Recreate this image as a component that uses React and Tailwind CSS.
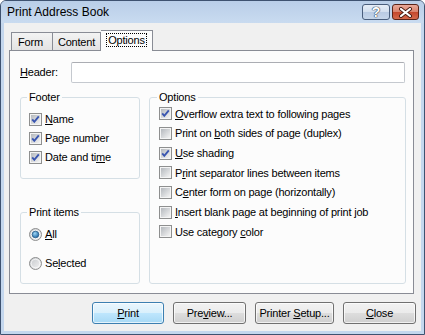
function Check({ checked }) {
  return (
    <svg width="13" height="13" viewBox="0 0 13 13" className="shrink-0">
      <defs>
        <linearGradient id="cbIn" x1="0" y1="0" x2="1" y2="1">
          <stop offset="0" stopColor="#b4b8bd" />
          <stop offset="1" stopColor="#f4f4f4" />
        </linearGradient>
      </defs>
      <rect x="0.5" y="0.5" width="12" height="12" fill="#f4f4f4" stroke="#8e8f8f" />
      <rect x="2" y="2" width="9" height="9" fill="url(#cbIn)" />
      {checked && (
        <path d="M3.2 6.4 L5.3 8.8 L9.8 3.4" fill="none" stroke="#3a56b0" strokeWidth="1.9" />
      )}
    </svg>
  )
}

function Radio({ checked }) {
  return (
    <svg width="13" height="13" viewBox="0 0 13 13" className="shrink-0">
      <defs>
        <linearGradient id="rbIn" x1="0" y1="0" x2="1" y2="1">
          <stop offset="0" stopColor="#c2c5c9" />
          <stop offset="1" stopColor="#f6f6f6" />
        </linearGradient>
        <radialGradient id="rbDot" cx="0.4" cy="0.35" r="0.7">
          <stop offset="0" stopColor="#9fd8f7" />
          <stop offset="1" stopColor="#17609f" />
        </radialGradient>
      </defs>
      <circle cx="6.5" cy="6.5" r="6" fill="url(#rbIn)" stroke="#8e8f8f" />
      <circle cx="6.5" cy="6.5" r="4.3" fill="none" stroke="#fbfbfb" strokeWidth="0.8" />
      {checked && <circle cx="6.5" cy="6.5" r="3.3" fill="url(#rbDot)" stroke="#2b5f8c" strokeWidth="0.8" />}
    </svg>
  )
}

function Row({ children, checked, radio, h = 'h-[19px]' }) {
  return (
    <div className={`flex items-center gap-[3px] ${h}`}>
      {radio ? <Radio checked={checked} /> : <Check checked={checked} />}
      <span className="whitespace-nowrap">{children}</span>
    </div>
  )
}

function Btn({ children, w, primary }) {
  return (
    <button
      className={`${w} h-[22px] rounded-[3px] border text-[11px] text-black shadow-[inset_0_0_0_1px_#ffffffb0] ${
        primary
          ? 'border-[#3c7fb1] bg-[linear-gradient(#eaf6fd_0%,#d9f0fc_50%,#bee6fd_51%,#a7d9f5_100%)]'
          : 'border-[#707070] bg-[linear-gradient(#f2f2f2_0%,#ebebeb_50%,#dddddd_51%,#cfcfcf_100%)]'
      }`}
    >
      {children}
    </button>
  )
}

export default function App() {
  return (
    <div className="w-[425px] h-[335px] flex flex-col border border-[#3e5270] rounded-t-[6px] bg-[#c4d7ee] overflow-hidden font-['Liberation_Sans',Arial,sans-serif] text-[11px] tracking-[-0.2px] text-black">
      {/* title bar */}
      <div className="h-[22px] flex items-center pl-[6px] pr-[5px] bg-[linear-gradient(#b9cee8,#c9dbf0)]">
        <span className="flex-1 text-[12px] tracking-normal">Print Address Book</span>
        <div className="flex gap-[2px]">
          <div className="w-[28px] h-[16px] rounded-[3px] border border-[#4a5e7c] bg-[linear-gradient(#e6eef8_0%,#d3dfee_50%,#b9cbe3_51%,#c6d6ea_100%)] flex items-center justify-center">
            <span className="text-[14px] font-bold leading-none text-white [text-shadow:0_0_1px_#2c3a50,0_0_1px_#2c3a50,0_0_1px_#2c3a50]">?</span>
          </div>
          <div className="w-[27px] h-[16px] rounded-[3px] border border-[#5a2418] bg-[linear-gradient(#e9a999_0%,#d9826c_50%,#c4472c_51%,#d56a4c_100%)] flex items-center justify-center">
            <svg width="15" height="11" viewBox="0 0 15 11">
              <path d="M3 2 L12 9 M12 2 L3 9" stroke="#4a1d14" strokeWidth="4" strokeLinecap="round" />
              <path d="M3 2 L12 9 M12 2 L3 9" stroke="#ffffff" strokeWidth="2.2" strokeLinecap="round" />
            </svg>
          </div>
        </div>
      </div>

      {/* client area */}
      <div className="mx-[3px] mb-[3px] flex-1 bg-[#f0f0f0] flex flex-col pt-[7px]">
        <div className="flex items-end h-[21px] ml-[7px]">
          <div className="w-[42px] h-[19px] border border-[#898c95] border-b-0 bg-[linear-gradient(#f3f3f3,#e2e2e2)] flex items-center justify-center pr-[3px]">
            Form
          </div>
          <div className="w-[48px] h-[19px] border border-[#898c95] border-b-0 border-l-0 bg-[linear-gradient(#f3f3f3,#e2e2e2)] flex items-center justify-center">
            Content
          </div>
          <div className="relative z-10 w-[52px] h-[21px] border border-[#898c95] border-b-0 border-l-0 bg-[#fcfcfc] flex items-center justify-center pb-[2px]">
            <span className="border border-dotted border-black px-[1px] leading-[12px]">Options</span>
          </div>
        </div>

        <div className="-mt-px ml-[5px] w-[405px] h-[244px] border border-[#898c95] bg-[#fcfcfc] flex flex-col">
          <div className="flex items-center mt-[11px] ml-[10px]">
            <span className="w-[51px]">
              <u>H</u>eader:
            </span>
            <div className="w-[334px] h-[21px] border border-[#c5c9cf] border-t-[#abadb3] rounded-[2px] bg-white" />
          </div>

          <div className="flex gap-[9px] ml-[10px] mt-[8px]">
            <div className="w-[120px] flex flex-col gap-[27px]">
              <fieldset className="h-[88px] border border-[#d5dfe5] rounded-[3px]">
                <legend className="ml-[6px] px-[2px] leading-[13px]">Footer</legend>
                <div className="flex flex-col pt-[6px] pl-[8px]">
                  <Row checked>
                    <u>N</u>ame
                  </Row>
                  <Row checked>Page number</Row>
                  <Row checked>
                    Date and ti<u>m</u>e
                  </Row>
                </div>
              </fieldset>
              <fieldset className="h-[78px] border border-[#d5dfe5] rounded-[3px]">
                <legend className="ml-[6px] px-[2px] leading-[13px]">Print items</legend>
                <div className="flex flex-col gap-[10px] pt-[6px] pl-[8px]">
                  <Row radio checked>
                    <u>A</u>ll
                  </Row>
                  <Row radio>
                    Se<u>l</u>ected
                  </Row>
                </div>
              </fieldset>
            </div>

            <fieldset className="w-[257px] h-[193px] border border-[#d5dfe5] rounded-[3px]">
              <legend className="ml-[7px] px-[2px] leading-[13px]">Options</legend>
              <div className="flex flex-col pl-[9px]">
                <Row checked h="h-[19.67px]">
                  <u>O</u>verflow extra text to following pages
                </Row>
                <Row h="h-[19.67px]">
                  Print on <u>b</u>oth sides of page (duplex)
                </Row>
                <Row checked h="h-[19.67px]">
                  <u>U</u>se shading
                </Row>
                <Row h="h-[19.67px]">
                  P<u>r</u>int separator lines between items
                </Row>
                <Row h="h-[19.67px]">
                  C<u>e</u>nter form on page (horizontally)
                </Row>
                <Row h="h-[19.67px]">
                  <u>I</u>nsert blank page at beginning of print job
                </Row>
                <Row h="h-[19.67px]">
                  Use category <u>c</u>olor
                </Row>
              </div>
            </fieldset>
          </div>
        </div>

        <div className="flex justify-end gap-[9px] pr-[5px] mt-[8px]">
          <Btn w="w-[72px]" primary>
            <u>P</u>rint
          </Btn>
          <Btn w="w-[73px]">
            Pre<u>v</u>iew...
          </Btn>
          <Btn w="w-[79px]">
            Printer <u>S</u>etup...
          </Btn>
          <Btn w="w-[73px]">
            <u>C</u>lose
          </Btn>
        </div>
      </div>
    </div>
  )
}
